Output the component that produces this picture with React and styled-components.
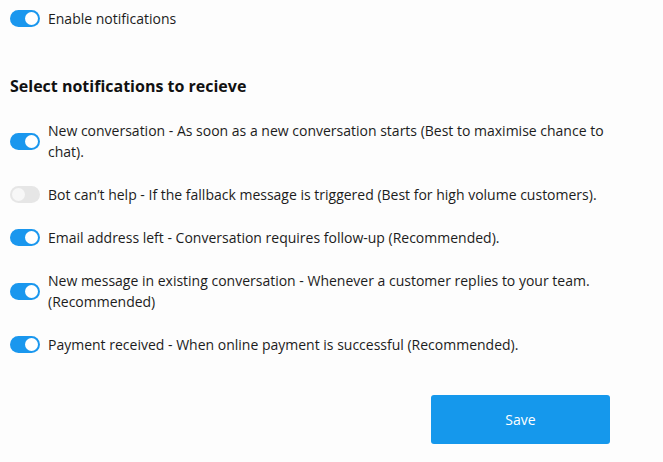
import React, { useState } from 'react';
import styled, { createGlobalStyle } from 'styled-components';

const GlobalStyle = createGlobalStyle`
  body {
    margin: 8px 0 0 0;
    background: #fdfdfd;
    font-family: "Open Sans", "Noto Sans", sans-serif;
    color: #1c1c1c;
  }
`;

const options = [
  { id: 'new', label: 'New conversation - As soon as a new conversation starts (Best to maximise chance to chat).', on: true },
  { id: 'bot', label: 'Bot can’t help - If the fallback message is triggered (Best for high volume customers).', on: false },
  { id: 'email', label: 'Email address left - Conversation requires follow-up (Recommended).', on: true },
  { id: 'message', label: 'New message in existing conversation - Whenever a customer replies to your team. (Recommended)', on: true },
  { id: 'payment', label: 'Payment received - When online payment is successful (Recommended).', on: true },
];

const Toggle = ({ on, onClick }) => (
  <Track $on={on} onClick={onClick}>
    <Knob $on={on} />
  </Track>
);

const App = () => {
  const [enabled, setEnabled] = useState(true);
  const [state, setState] = useState(() =>
    Object.fromEntries(options.map((o) => [o.id, o.on]))
  );

  return (
    <Page>
      <GlobalStyle />
      <Row>
        <Toggle on={enabled} onClick={() => setEnabled(!enabled)} />
        <Label>Enable notifications</Label>
      </Row>

      <Heading>Select notifications to recieve</Heading>

      <List>
        {options.map((o) => (
          <Row key={o.id}>
            <Toggle
              on={state[o.id]}
              onClick={() => setState({ ...state, [o.id]: !state[o.id] })}
            />
            <Label>{o.label}</Label>
          </Row>
        ))}
      </List>

      <Footer>
        <SaveButton>Save</SaveButton>
      </Footer>
    </Page>
  );
};

const Page = styled.div`
  width: 600px;
  padding-left: 10px;
`;

const Row = styled.div`
  display: flex;
  align-items: center;
  gap: 8px;
`;

const Track = styled.div`
  flex: none;
  position: relative;
  width: 30px;
  height: 17px;
  border-radius: 9px;
  background: ${(p) => (p.$on ? '#1a97ee' : '#e6e6e6')};
  cursor: pointer;
`;

const Knob = styled.span`
  position: absolute;
  top: 2px;
  left: ${(p) => (p.$on ? '15px' : '2px')};
  width: 13px;
  height: 13px;
  border-radius: 50%;
  background: ${(p) => (p.$on ? '#fff' : '#f7f7f7')};
`;

const Label = styled.span`
  font-size: 14px;
  line-height: 21px;
`;

const Heading = styled.h3`
  margin: 47px 0 24px;
  font-size: 16px;
  line-height: 20px;
  font-weight: 700;
  color: #111;
`;

const List = styled.div`
  display: flex;
  flex-direction: column;
  gap: 22px;
`;

const Footer = styled.div`
  display: flex;
  justify-content: flex-end;
  margin-top: 40px;
`;

const SaveButton = styled.button`
  width: 179px;
  height: 49px;
  border: none;
  border-radius: 3px;
  background: #1598ec;
  color: #fff;
  font-family: "Open Sans", "Noto Sans", sans-serif;
  font-size: 14px;
  font-weight: 500;
  cursor: pointer;
`;

export default App;
